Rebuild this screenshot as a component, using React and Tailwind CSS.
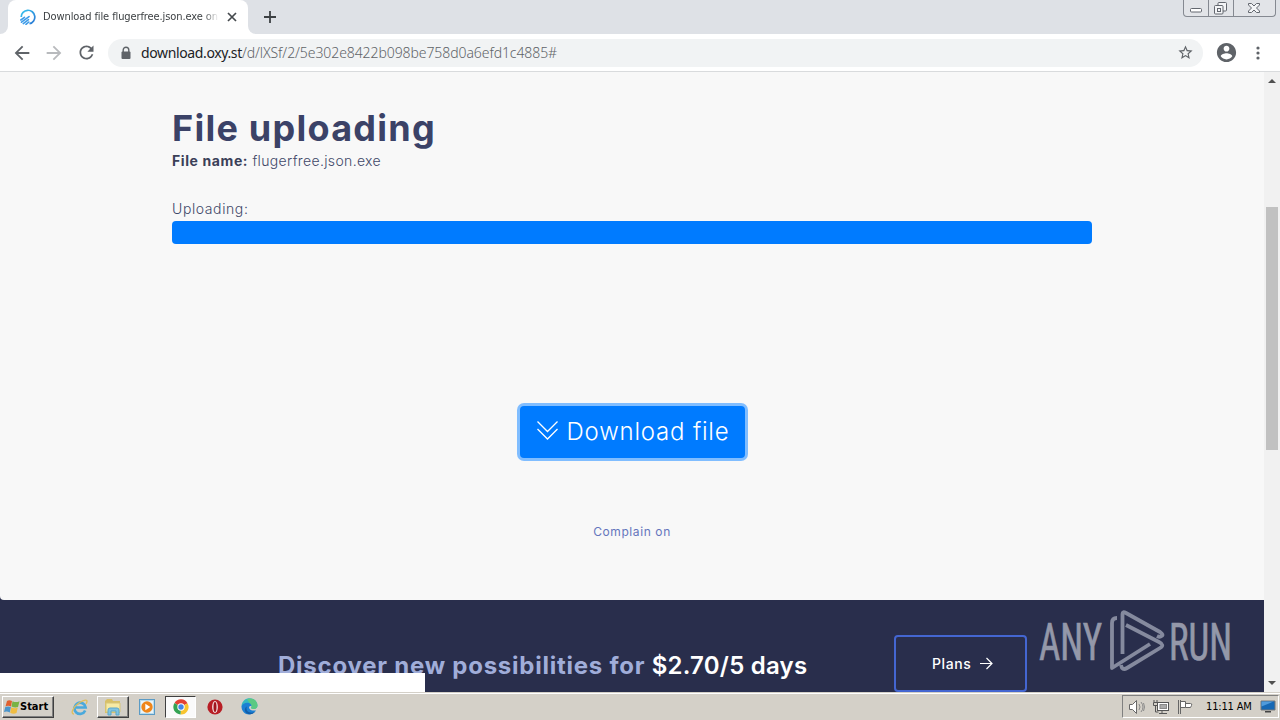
import React from "react";

function ToolButton({ children, label, className = "" }) {
  return (
    <button aria-label={label} className={`flex h-6 w-6 shrink-0 items-center justify-center ${className}`}>
      {children}
    </button>
  );
}

function MaterialIcon({ d, size = 18, fill = "#5f6368" }) {
  return (
    <svg width={size} height={size} viewBox="0 0 24 24" fill={fill}>
      <path d={d} />
    </svg>
  );
}

function SiteIcon() {
  return (
    <svg width="16" height="16" viewBox="0 0 16 16" fill="none" className="shrink-0">
      <defs>
        <linearGradient id="site" x1="0" y1="0" x2="1" y2="1">
          <stop offset="0" stopColor="#39c4ee" />
          <stop offset="1" stopColor="#2a77d4" />
        </linearGradient>
      </defs>
      <path d="M1.200 8A6.800 6.800 0 1 1 9.500 14.700" stroke="url(#site)" strokeWidth="1.700" />
      <path d="M.8 11 4.500 8.300M1.500 13.200 9 7.600M3.300 14.600 8.500 10.700M6 15.400 8.800 13" stroke="#3d9be8" strokeWidth="1.600" strokeLinecap="round" />
    </svg>
  );
}

function TabStrip() {
  return (
    <div className="flex h-[34px] bg-[#dee1e6]">
      <div className="flex w-2 bg-white">
        <div className="flex-1 rounded-br-lg bg-[#dee1e6]" />
      </div>
      <div className="flex w-[240px] items-center rounded-t-lg bg-white pl-3">
        <SiteIcon />
        <div className="ml-[7px] w-[176px] overflow-hidden whitespace-nowrap pt-px font-['DejaVu_Sans',sans-serif] text-[11px] tracking-[-0.1px] text-[#3c4043] [font-stretch:condensed] [mask-image:linear-gradient(to_right,black_91%,transparent_100%)]">
          Download file flugerfree.json.exe on
        </div>
        <svg width="10" height="10" viewBox="0 0 10 10" className="ml-[8px] shrink-0">
          <path d="M1 1 9 9M9 1 1 9" stroke="#45494d" strokeWidth="1.700" />
        </svg>
      </div>
      <div className="flex w-2 bg-white">
        <div className="flex-1 rounded-bl-lg bg-[#dee1e6]" />
      </div>
      <svg width="12" height="12" viewBox="0 0 12 12" className="ml-2 mt-[11px]">
        <path d="M6 0V12M0 6H12" stroke="#3c4043" strokeWidth="1.800" />
      </svg>
      <div className="ml-auto mr-1 flex h-[17px] w-[93px] rounded-b border border-t-0 border-[#858991] bg-[#e2e4e8]">
        <div className="w-[25px] border-r border-[#858991]">
          <svg width="24" height="16" fill="#fff" stroke="#63676f">
            <rect x="6.500" y="8.500" width="11" height="3.500" rx="1" />
          </svg>
        </div>
        <div className="w-[25px] border-r border-[#858991]">
          <svg width="24" height="16" fill="#f4f5f7" stroke="#63676f">
            <rect x="9" y="2.500" width="8.500" height="8.500" rx="1" />
            <rect x="5.500" y="5.500" width="8.500" height="8.500" rx="1" />
            <rect x="8.500" y="8.500" width="3" height="3" />
          </svg>
        </div>
        <svg width="41" height="16">
          <path d="m14.500 3.500 3 0 2.500 2.500 2.500-2.500 3 0 0 1.500-3 3 3 3 0 1.500-3 0-2.500-2.500-2.500 2.500-3 0 0-1.500 3-3-3-3Z" fill="#f4f5f7" stroke="#63676f" />
        </svg>
      </div>
    </div>
  );
}

function Toolbar() {
  return (
    <div className="flex h-[38px] items-center border-b border-[#d9dbdd] bg-white pl-[10px]">
      <ToolButton label="Back">
        <MaterialIcon size={22} d="M20 11H7.830l5.590-5.590L12 4l-8 8 8 8 1.410-1.410L7.830 13H20z" />
      </ToolButton>
      <ToolButton label="Forward" className="ml-2">
        <MaterialIcon size={22} fill="#b8babd" d="m12 4-1.410 1.410L16.170 11H4v2h12.170l-5.580 5.590L12 20l8-8z" />
      </ToolButton>
      <ToolButton label="Reload" className="ml-2">
        <MaterialIcon size={21} d="M17.650 6.350C16.200 4.900 14.210 4 12 4c-4.420 0-7.990 3.580-7.990 8s3.570 8 7.990 8c3.730 0 6.840-2.550 7.730-6h-2.080c-.82 2.330-3.040 4-5.650 4-3.310 0-6-2.690-6-6s2.690-6 6-6c1.660 0 3.140.69 4.220 1.780L13 11h7V4z" />
      </ToolButton>
      <div className="ml-[10px] flex h-7 w-[1095px] items-center rounded-full bg-[#f1f3f4] pl-3 pr-[9px]">
        <svg width="12" height="14" viewBox="0 0 12 14" className="shrink-0">
          <path d="M3.200 6V4a2.800 2.800 0 0 1 5.600 0v2" fill="none" stroke="#5f6368" strokeWidth="1.400" />
          <rect x="1.500" y="5.500" width="9" height="7.500" rx="1" fill="#5f6368" />
        </svg>
        <div className="ml-[9px] -mt-px whitespace-nowrap font-['Noto_Sans','Open_Sans',sans-serif] text-[14px] font-light text-[#5f6368]">
          <span className="font-normal tracking-[-0.37px] text-[#202124]">download.oxy.st</span>
          <span className="tracking-[-0.08px]">/d/lXSf/2/5e302e8422b098be758d0a6efd1c4885#</span>
        </div>
        <div className="ml-auto">
          <MaterialIcon size={17} d="m22 9.240-7.190-.620L12 2 9.190 8.630 2 9.240l5.460 4.730L5.820 21 12 17.270 18.180 21l-1.630-7.030zM12 15.400l-3.760 2.270 1-4.280-3.320-2.880 4.380-.380L12 6.100l1.710 4.040 4.380.380-3.320 2.880 1 4.280z" />
        </div>
      </div>
      <div className="ml-3">
        <MaterialIcon size={23} d="M12 2C6.480 2 2 6.480 2 12s4.480 10 10 10 10-4.480 10-10S17.520 2 12 2zm0 3c1.660 0 3 1.340 3 3s-1.340 3-3 3-3-1.340-3-3 1.340-3 3-3zm0 14.200c-2.500 0-4.710-1.280-6-3.220.030-1.990 4-3.080 6-3.080 1.990 0 5.970 1.090 6 3.080-1.290 1.940-3.500 3.220-6 3.220z" />
      </div>
      <svg width="4" height="14" viewBox="0 0 4 14" fill="#5f6368" className="ml-[18px]">
        <circle cx="2" cy="2" r="1.600" />
        <circle cx="2" cy="7" r="1.600" />
        <circle cx="2" cy="12" r="1.600" />
      </svg>
    </div>
  );
}

function UploadPanel() {
  return (
    <main className="flex h-[528px] flex-col rounded-bl bg-[#f8f8f8] px-[172px] pt-[34px] font-['Inter',sans-serif] text-[#414868]">
      <h1 className="h-[43px] whitespace-nowrap text-[36px] font-bold leading-[44px] tracking-[1.25px] text-[#3b4267]">File uploading</h1>
      <p className="h-6 whitespace-nowrap text-[14px] font-light leading-[23px] tracking-[0.35px]">
        <b className="font-bold tracking-[0.6px] text-[#3b4058]">File name:</b> flugerfree.json.exe
      </p>
      <p className="mt-6 h-6 text-[14px] font-light leading-[23px] tracking-[0.6px]">Uploading:</p>
      <div className="h-[23px] rounded bg-[#007bff]" />
      <button className="mt-[162px] flex h-[52px] w-[225px] shrink-0 items-center self-center rounded bg-[#007bff] pl-[17px] text-white ring-[3px] ring-[#80bdff]">
        <svg width="21" height="19" viewBox="0 0 21 19" fill="none" stroke="currentColor" strokeWidth="1.300" className="-mt-[3px]">
          <path d="m.5.5 10 10 10-10M.5 8l10 10 10-10" />
        </svg>
        <span className="ml-[9px] whitespace-nowrap text-[24px] font-light tracking-[0.8px]">Download file</span>
      </button>
      <a className="mt-[63px] self-center whitespace-nowrap text-[12px] leading-[22px] tracking-[0.6px] text-[#6576bd]">Complain on</a>
    </main>
  );
}

function Watermark() {
  return (
    <svg width="204" height="78" viewBox="0 0 204 78" className="absolute left-[1038px] top-[9px]" fill="#9498a9">
      <g fontFamily="'Roboto Condensed','Liberation Sans Narrow',Roboto,sans-serif" fontSize="51" stroke="#9498a9" strokeWidth="0.700">
        <text x="1" y="51" textLength="63" lengthAdjust="spacingAndGlyphs">ANY</text>
        <text x="131" y="51" textLength="63" lengthAdjust="spacingAndGlyphs">RUN</text>
      </g>
      <g fill="none" stroke="#858a9e" strokeWidth="3.800" strokeLinejoin="round">
        <path d="M79 9Q74 9 74 14V59L112 35" />
        <path d="M84.500 45V5Q84.500 2 88 4L122 23Q126 26 123.500 27Q122 28.500 119 27" />
        <path d="M83 56Q84 62 89 59L122 39Q127 36 121 33L88 16" />
      </g>
    </svg>
  );
}

function PlansBanner() {
  return (
    <section className="relative flex h-[92px] bg-[#292e4c] pl-[278px] font-['Inter',sans-serif]">
      <h2 className="w-[616px] whitespace-nowrap pt-[49px] text-[24px] font-bold leading-[33px] tracking-[0.76px] text-[#a0add9]">
        Discover new possibilities for <span className="font-semibold tracking-[0.22px] text-white">$2.70/5 days</span>
      </h2>
      <button className="mt-[35px] flex h-[57px] w-[133px] items-center rounded border-2 border-[#4466d1] pl-9 text-[14px] font-medium tracking-[0.6px] text-white">
        Plans
        <svg width="13" height="13" viewBox="0 0 13 13" fill="none" stroke="currentColor" strokeWidth="1.200" className="ml-[9px]">
          <path d="M0 6.500H12M6.500 1 12 6.500 6.500 12" />
        </svg>
      </button>
      <Watermark />
      <div className="absolute bottom-0 left-0 h-[19px] w-[425px] bg-white" />
    </section>
  );
}

function Scrollbar() {
  return (
    <div className="flex w-4 flex-col items-center bg-[#f1f1f1]">
      <svg width="8" height="4" className="mt-[7px]"><path d="M0 4 4 0 8 4Z" fill="#505050" /></svg>
      <div className="mt-[124px] h-[243px] w-3 bg-[#c1c1c1]" />
      <svg width="8" height="4" className="mb-[7px] mt-auto"><path d="M0 0 4 4 8 0Z" fill="#505050" /></svg>
    </div>
  );
}

function WindowsIcon() {
  return (
    <svg width="16" height="16" viewBox="0 0 16 16">
      <path d="M3 2Q5 .5 8 2L7 7.500Q4 6 1.500 7.500Z" fill="#e0602f" />
      <path d="M8.500 2.200Q12 4 15.500 2.200L14 8Q11 9 7.500 7.500Z" fill="#79b344" />
      <path d="M1.300 8Q4 7 6.900 8L5.800 13.500Q3 12 0 13Z" fill="#4b95cb" />
      <path d="M7.300 8.200Q11 10 13.800 8.500L12.500 14Q9.500 15.500 6.200 13.800Z" fill="#f0bd42" />
    </svg>
  );
}

function ExplorerIcon() {
  return (
    <svg width="18" height="18" viewBox="0 0 18 18">
      <path d="M1 3 3 1h5l1 2h7v12H1Z" fill="#d8c067" />
      <path d="M2 5h14v9H2Z" fill="#f7eaa4" stroke="#d6c57b" />
      <path d="M4 17v-5q0-2 2-2h7q2 0 2 2v5h-3v-4H7v4Z" fill="#80c4e2" stroke="#5ba7cb" />
    </svg>
  );
}

function InternetExplorerIcon() {
  return (
    <svg width="18" height="18" viewBox="0 0 18 18" fill="none">
      <path d="M14.200 12.500A5.600 5.600 0 1 1 14.600 9.500H5" stroke="#4aa9dc" strokeWidth="2.700" />
      <path d="M3 16C-1 16 2 9 8 5S18 1 15 6" stroke="#dfbe5d" strokeWidth="1.400" />
    </svg>
  );
}

function MediaIcon() {
  return (
    <svg width="16" height="16" viewBox="0 0 16 16">
      <rect x=".5" y=".5" width="15" height="15" fill="#b9dced" stroke="#5b9bc5" />
      <rect x="2" y="2" width="12" height="12" fill="#e9f4f9" />
      <circle cx="8" cy="8" r="5.700" fill="#ef861a" />
      <path d="m6.300 4.700 5 3.300-5 3.300Z" fill="#fff" />
    </svg>
  );
}

function ChromeIcon() {
  return (
    <svg width="16" height="16" viewBox="0 0 16 16">
      <path d="M8 8 1.500 4A7.500 7.500 0 0 1 14.500 4.200Z" fill="#e34133" />
      <path d="M8 8 14.500 4.200A7.500 7.500 0 0 1 7.500 15.500Z" fill="#f8c42f" />
      <path d="M8 8 7.500 15.500A7.500 7.500 0 0 1 1.500 4Z" fill="#34a353" />
      <circle cx="8" cy="8" r="3.700" fill="#fff" />
      <circle cx="8" cy="8" r="2.700" fill="#4286e8" />
    </svg>
  );
}

function OperaIcon() {
  return (
    <svg width="16" height="16" viewBox="0 0 16 16">
      <circle cx="8" cy="8" r="7.600" fill="#b81e25" />
      <ellipse cx="8" cy="8" rx="2.900" ry="6" fill="#f3dede" />
      <ellipse cx="8" cy="8" rx="1.500" ry="5" fill="#a1151d" />
    </svg>
  );
}

function EdgeIcon() {
  return (
    <svg width="17" height="17" viewBox="0 0 17 17">
      <path d="M.5 8.500C1-2.500 16-2 16.500 7.500c0 3.500-3.500 4-6 3-1-.5.5-1.500 0-3-1.500-3-6.500-2-10 1Z" fill="#35b8c0" />
      <path d="M6 1.300C11-1 16.500 2 16.500 7.500c0 3.500-3.500 4-6 3-1-.5.5-1.500 0-3Z" fill="#5bc983" />
      <path d="M.5 8.500C2 4 10 3.500 10.500 8c-4-1-3.500 5.500 4.500 4.500C9.500 20 .500 16 .5 8.500Z" fill="#1b7fd3" />
      <path d="M6 8.500c-2 4 2 8 8 5.500-4 4-9 2-10-1-.5-2 .5-4 2-4.500Z" fill="#125da8" />
    </svg>
  );
}

function Taskbar() {
  return (
    <footer className="flex h-7 items-center border-t border-[#d4d0c8] bg-[#d4d0c8] pl-[2px] shadow-[inset_0_1px_0_#fff]">
      <button className="flex h-[22px] w-[52px] items-center border border-b-[#404040] border-l-white border-r-[#404040] border-t-white pl-px font-['DejaVu_Sans',sans-serif] text-[11px] font-bold tracking-[0px] text-black shadow-[inset_-1px_-1px_0_#808080] [font-stretch:condensed]">
        <WindowsIcon />
        <span className="pt-px">Start</span>
      </button>
      <div className="ml-[17px]"><InternetExplorerIcon /></div>
      <div className="ml-2 flex h-[22px] w-8 items-center justify-center border border-b-[#404040] border-l-white border-r-[#404040] border-t-white shadow-[inset_-1px_-1px_0_#808080]"><ExplorerIcon /></div>
      <div className="ml-[10px]"><MediaIcon /></div>
      <div className="ml-[10px] flex h-[22px] w-[31px] items-center justify-center border border-b-white border-l-[#404040] border-r-white border-t-[#404040] bg-[#fafafa]"><ChromeIcon /></div>
      <div className="ml-[11px]"><OperaIcon /></div>
      <div className="ml-[18px]"><EdgeIcon /></div>
      <div className="ml-auto mr-px flex h-[23px] w-[157px] items-center border border-b-white border-l-[#808080] border-r-white border-t-[#808080] pl-[6px]">
        <svg width="17" height="16" viewBox="0 0 17 16" fill="none" stroke="#686868" className="shrink-0">
          <path d="M.5 5.500h3l4-4v13l-4-4h-3Z" fill="#fff" />
          <path d="M10 5q2 3 0 6M12 3q4 5 0 10M14.500 4q2 4 0 8" stroke="#8a8a8a" />
        </svg>
        <svg width="17" height="16" viewBox="0 0 17 16" fill="none" stroke="#555" className="ml-[7px] shrink-0">
          <rect x="4.500" y="3.500" width="11" height="8" fill="#fff" />
          <rect x="7" y="5.500" width="6.500" height="4" fill="#aaa" stroke="#888" />
          <path d="M9 12v2M6 14.500h8M1 1v2M4 1v2M.5 3.500h4v3h-4ZM2.500 7v6h3" />
        </svg>
        <svg width="16" height="16" viewBox="0 0 16 16" className="ml-[7px] shrink-0" fill="#fff" stroke="#666">
          <path d="M1.500 1v14M3.500 1v14M3.500 2.500h5v6h-5ZM8.500 4.500h5q2 0 1 2l-1 2H8.500" />
        </svg>
        <span className="ml-[13px] w-[47px] whitespace-nowrap pt-[2px] font-['DejaVu_Sans',sans-serif] text-[11px] tracking-[-0.15px] text-black [font-stretch:condensed]">11:11 AM</span>
        <svg width="16" height="13" viewBox="0 0 16 13" className="ml-[7px] shrink-0">
          <path d="M1 1h14v9H1Z" fill="#1768b4" stroke="#777" />
          <path d="m1.500 1.500 12 0-12 5Z" fill="#509bdc" />
          <path d="M5 11h6v1.500H5Z" fill="#444" />
        </svg>
      </div>
    </footer>
  );
}

export default function App() {
  return (
    <div className="flex h-[720px] w-[1280px] flex-col overflow-hidden">
      <TabStrip />
      <Toolbar />
      <div className="flex h-[620px]">
        <div className="w-[1264px] bg-[#292e4c]">
          <UploadPanel />
          <PlansBanner />
        </div>
        <Scrollbar />
      </div>
      <Taskbar />
    </div>
  );
}
